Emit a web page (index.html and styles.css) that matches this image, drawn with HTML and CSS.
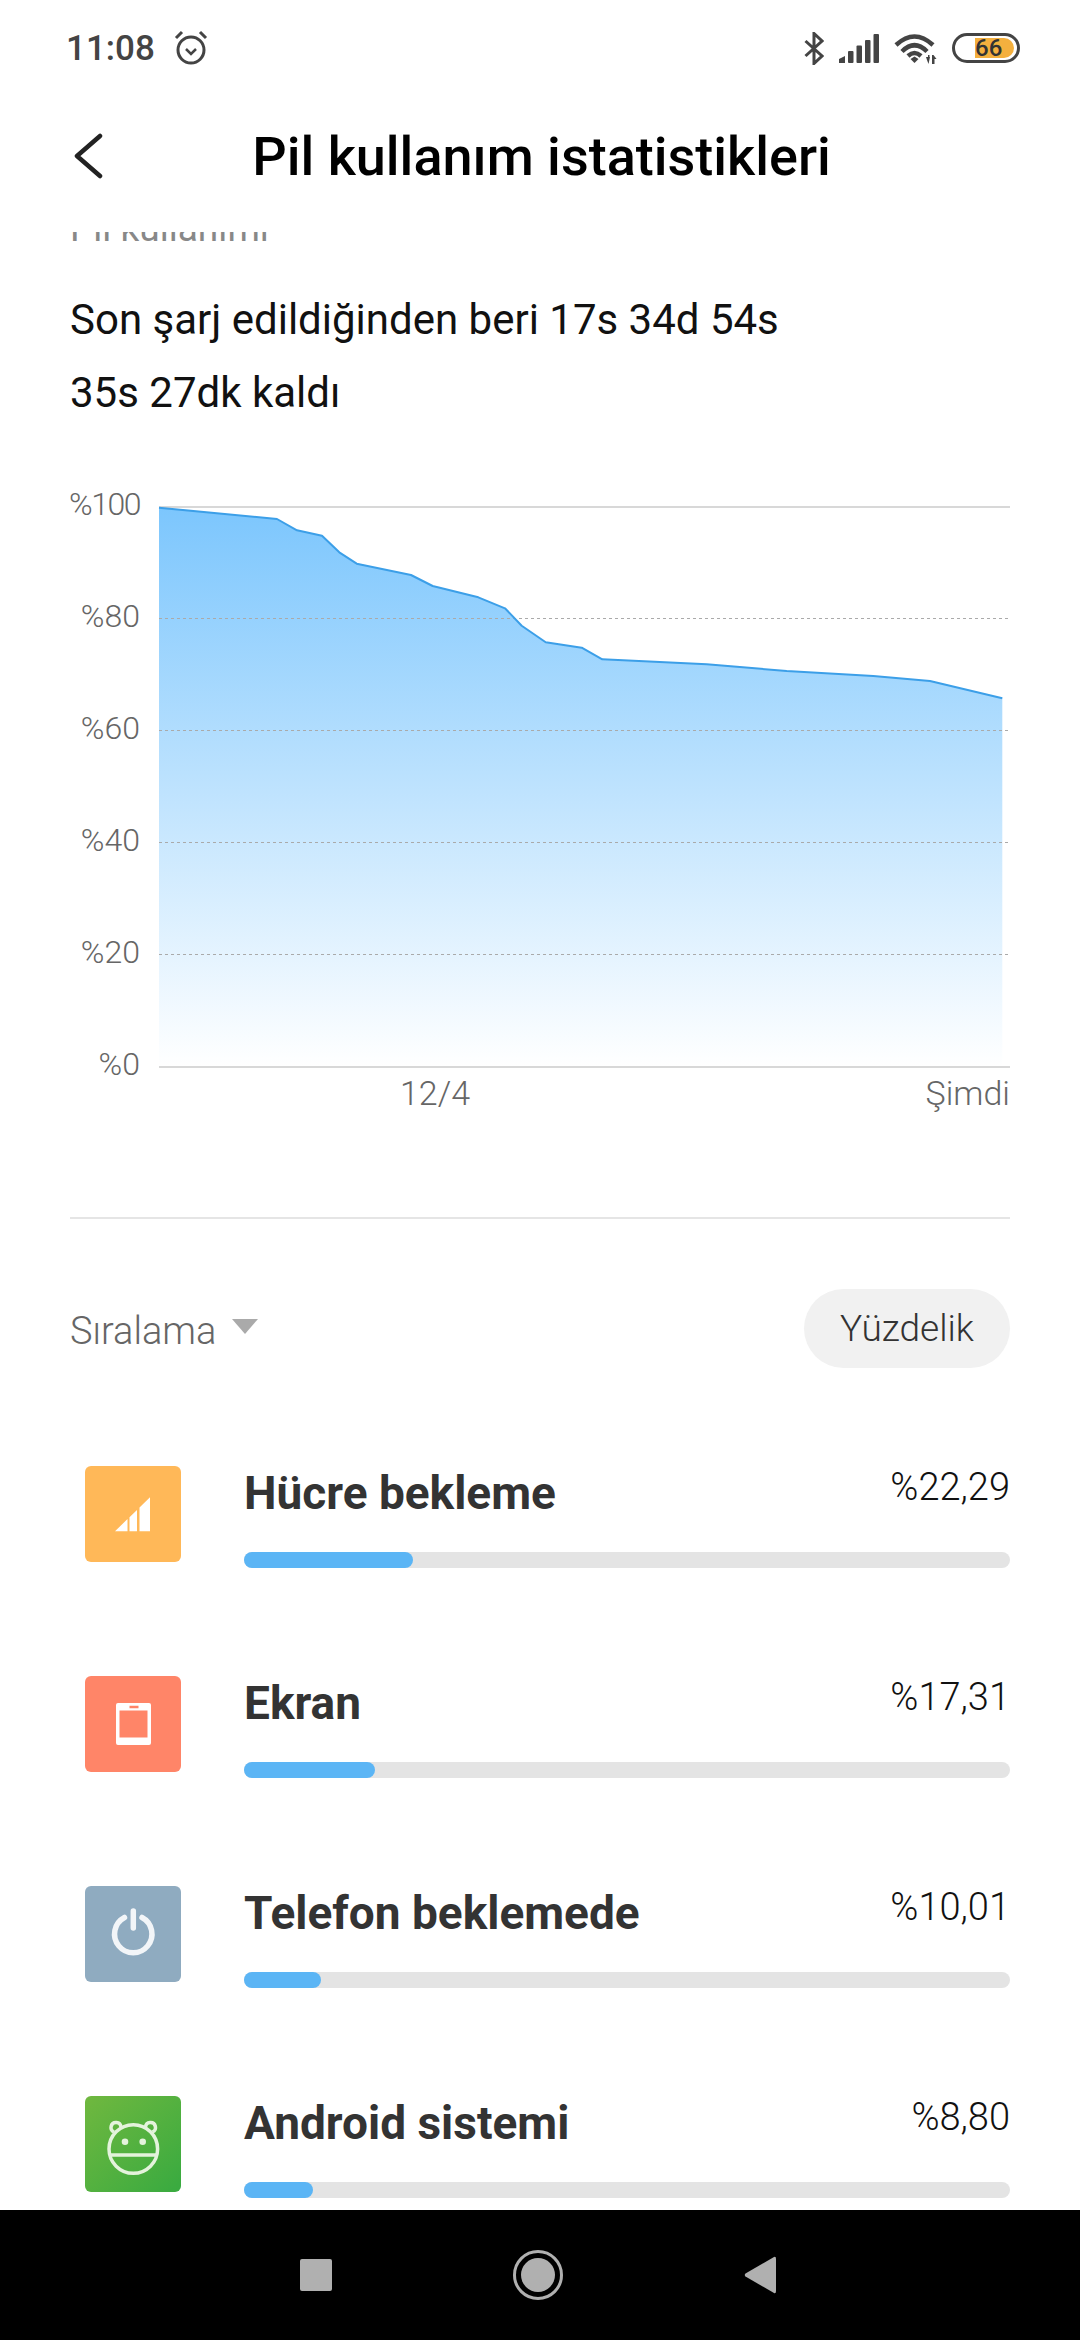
FILE: index.html
```html
<!DOCTYPE html>
<html lang="tr">
<head>
  <meta charset="UTF-8" />
  <meta name="viewport" content="width=device-width, initial-scale=1.0"/>
  <title>Pil kullanım istatistikleri</title>
  <link rel="stylesheet" href="styles.css">
</head>
<body>
  <div class="phone">

    <!-- status bar + title -->
    <header class="top">
      <div class="statusbar">
        <div class="status-left">
          <span class="time">11:08</span>
          <svg class="ic-alarm" viewBox="0 0 36 36">
            <circle cx="18" cy="20" r="13" />
            <path d="M3 8 L9 2 M33 8 L27 2" />
            <path class="thin" d="M13 19 L18 24 L23 19" />
          </svg>
        </div>
        <div class="status-right">
          <svg class="ic-bt" viewBox="0 0 20 33">
            <path d="M1.5 9 L18 24 L10 31.5 L10 1.5 L18 9 L1.5 24" />
          </svg>
          <svg class="ic-signal" viewBox="0 0 40 29">
            <path d="M0 29 V25 L6 22 V29 Z" />
            <rect x="9" y="17" width="5.5" height="12" rx="1" />
            <rect x="17.5" y="11.5" width="5.5" height="17.5" rx="1" />
            <rect x="26" y="6" width="5.5" height="23" rx="1" />
            <rect x="34.5" y="0" width="5.5" height="29" rx="1" />
          </svg>
          <svg class="ic-wifi" viewBox="0 0 43 31">
            <path class="arc" d="M2 12 Q20.5 -5 39 12" />
            <path class="arc" d="M8 18.5 Q20.5 6 33 18.5" />
            <path class="arc" d="M14 23 Q20.5 17 27 23" />
            <path d="M16.5 26 L20.5 23.5 L24.5 26 L20.5 30 Z" />
            <path d="M32 24 H34 V22 H35.5 V24 L36 24 L34.5 31 L33 27 Z" />
            <path d="M38 22 H39.5 L42.5 26 H40.5 V31 H38 Z" />
          </svg>
          <div class="battery">
            <div class="battery-fill">66</div>
          </div>
        </div>
      </div>
      <div class="toolbar">
        <svg class="ic-back" viewBox="0 0 30 46">
          <path d="M27 3 L4 23 L27 43" />
        </svg>
        <h1>Pil kullanım istatistikleri</h1>
      </div>
    </header>

    <main class="content">
      <p class="usage-label">Pil kullanımı</p>
      <p class="summary">Son şarj edildiğinden beri 17s 34d 54s</p>
      <p class="summary">35s 27dk kaldı</p>

      <!-- battery chart, y = 480px less than on the screen -->
      <svg class="chart" viewBox="0 0 1080 660">
        <defs>
          <linearGradient id="areaFill" x1="0" y1="0" x2="0" y2="1">
            <stop offset="0" stop-color="#7cc6fd" />
            <stop offset="1" stop-color="#ffffff" />
          </linearGradient>
        </defs>
        <path class="area" d="M159 27.7 L277 39 L297 50.3 L322 55.7 L339.3 72.3 L356.7 83.7 L411 95 L432.7 106 L478.3 117.3 L505 128.3 L521.7 145.7 L545.7 162.3 L581.7 167.7 L602.3 179.3 L706.7 184.3 L786.7 191 L873.3 196 L930 201 L1002.3 218.3 L1002.3 587 L159 587 Z" />
        <line class="axis" x1="159" y1="27" x2="1010" y2="27" />
        <line class="grid" x1="159" y1="138.5" x2="1010" y2="138.5" />
        <line class="grid" x1="159" y1="250.5" x2="1010" y2="250.5" />
        <line class="grid" x1="159" y1="362.5" x2="1010" y2="362.5" />
        <line class="grid" x1="159" y1="474.5" x2="1010" y2="474.5" />
        <line class="axis" x1="159" y1="587" x2="1010" y2="587" />
        <path class="curve" d="M159 27.7 L277 39 L297 50.3 L322 55.7 L339.3 72.3 L356.7 83.7 L411 95 L432.7 106 L478.3 117.3 L505 128.3 L521.7 145.7 L545.7 162.3 L581.7 167.7 L602.3 179.3 L706.7 184.3 L786.7 191 L873.3 196 L930 201 L1002.3 218.3" />
        <text class="lbl tight" x="140" y="35">%100</text>
        <text class="lbl" x="140" y="147">%80</text>
        <text class="lbl" x="140" y="259">%60</text>
        <text class="lbl" x="140" y="371">%40</text>
        <text class="lbl" x="140" y="483">%20</text>
        <text class="lbl" x="140" y="595">%0</text>
        <text class="lbl xlbl mid" x="435" y="625">12/4</text>
        <text class="lbl xlbl" x="1010" y="625">Şimdi</text>
      </svg>

      <div class="divider"></div>

      <div class="sort-row">
        <div class="sort-by">Sıralama <span class="caret"></span></div>
        <div class="pill">Yüzdelik</div>
      </div>

      <ul class="apps">
        <li class="app">
          <svg class="app-icon" viewBox="0 0 96 96">
            <rect class="bg-orange" width="96" height="96" rx="6" />
            <path class="w" d="M30 65.3 L42.5 53 V65.3 Z M44.5 51.2 L52 44 V65.3 H44.5 Z M54.5 41.5 L65 31.3 V65.3 H54.5 Z" />
          </svg>
          <div class="app-info">
            <div class="app-head"><span class="app-name">Hücre bekleme</span><span class="app-val">%22,29</span></div>
            <div class="track"><div class="bar" style="width:22.1%"></div></div>
          </div>
        </li>
        <li class="app">
          <svg class="app-icon" viewBox="0 0 96 96">
            <rect class="bg-red" width="96" height="96" rx="6" />
            <path class="w" fill-rule="evenodd" d="M33 27 H64 Q66 27 66 29 V67 Q66 69 64 69 H33 Q31 69 31 67 V29 Q31 27 33 27 Z M34.5 34.5 V61.5 H62.5 V34.5 Z M44.5 29.7 V32.3 H53.5 V29.7 Z" />
          </svg>
          <div class="app-info">
            <div class="app-head"><span class="app-name">Ekran</span><span class="app-val">%17,31</span></div>
            <div class="track"><div class="bar" style="width:17.1%"></div></div>
          </div>
        </li>
        <li class="app">
          <svg class="app-icon" viewBox="0 0 96 96">
            <rect class="bg-slate" width="96" height="96" rx="6" />
            <path class="line-w" d="M39.5 31.5 A18.7 18.7 0 1 0 57 31.5" />
            <path class="line-w" stroke-linecap="butt" d="M48.3 25 V42" />
          </svg>
          <div class="app-info">
            <div class="app-head"><span class="app-name">Telefon beklemede</span><span class="app-val">%10,01</span></div>
            <div class="track"><div class="bar" style="width:10%"></div></div>
          </div>
        </li>
        <li class="app">
          <svg class="app-icon" viewBox="0 0 96 96">
            <defs>
              <linearGradient id="droidBg" x1="0" y1="0" x2="1" y2="1">
                <stop offset="0" stop-color="#70b83f" />
                <stop offset="1" stop-color="#38aa40" />
              </linearGradient>
            </defs>
            <rect class="bg-green" width="96" height="96" rx="6" />
            <circle class="line-g" cx="48.3" cy="53" r="24.3" />
            <path class="line-g" d="M24.5 59 H72 M36 31 A5 5 0 1 0 29 36 M60.5 31 A5 5 0 1 1 67.5 36" />
            <circle class="dot-g" cx="40" cy="45.7" r="3.3" />
            <circle class="dot-g" cx="57.7" cy="45.7" r="3.3" />
          </svg>
          <div class="app-info">
            <div class="app-head"><span class="app-name">Android sistemi</span><span class="app-val">%8,80</span></div>
            <div class="track"><div class="bar" style="width:9%"></div></div>
          </div>
        </li>
      </ul>
    </main>

    <nav class="navbar">
      <svg class="nav-ic" viewBox="0 0 32 32" width="32" height="32">
        <rect width="32" height="32" rx="2" />
      </svg>
      <svg class="nav-ic" viewBox="0 0 50 50" width="50" height="50">
        <circle class="ring" cx="25" cy="25" r="23.5" />
        <circle cx="25" cy="25" r="17" />
      </svg>
      <svg class="nav-ic" viewBox="0 0 32 38" width="32" height="38">
        <path d="M30 1 Q32 0 32 3 V35 Q32 38 30 37 L1.5 20.5 Q0 19 1.5 17.5 Z" />
      </svg>
    </nav>
  </div>
</body>
</html>
```

FILE: styles.css
```css
/* --- page --- */
* {
  box-sizing: border-box;
}

body {
  margin: 0;
  background-color: #fff;
  font-family: Roboto, "Noto Sans", sans-serif;
}

.phone {
  width: 1080px;
  height: 2340px;
  display: flex;
  flex-direction: column;
  overflow: hidden;
}

/* --- status bar --- */
.top {
  height: 232px;
  flex-shrink: 0;
  background-color: #fff;
}

.statusbar {
  height: 80px;
  padding: 16px 60px 0 66px;
  display: flex;
  justify-content: space-between;
  align-items: center;
}

.status-left,
.status-right {
  display: flex;
  align-items: center;
}

.status-left {
  gap: 18px;
}

.status-right {
  gap: 15px;
}

.time {
  font-size: 35px;
  font-weight: 500;
  color: #444;
}

.ic-alarm {
  width: 36px;
  height: 36px;
  fill: none;
  stroke: #444;
  stroke-width: 3;
}

.ic-alarm .thin {
  stroke-width: 2.5;
}

.ic-bt {
  width: 20px;
  height: 33px;
  fill: none;
  stroke: #444;
  stroke-width: 3;
}

.ic-signal {
  width: 40px;
  height: 29px;
  fill: #444;
}

.ic-wifi {
  width: 43px;
  height: 31px;
  fill: #444;
}

.ic-wifi .arc {
  fill: none;
  stroke: #444;
  stroke-width: 4.5;
}

.battery {
  width: 68px;
  height: 30px;
  padding: 2px 3px 2px 20px;
  border: 3px solid #444;
  border-radius: 15px;
  display: flex;
}

.battery-fill {
  flex: 1;
  background-color: #f4b03e;
  border-radius: 0 10px 10px 0;
  font-size: 24px;
  font-weight: 500;
  line-height: 20px;
  color: #333;
}

/* --- title --- */
.toolbar {
  height: 152px;
  padding: 0 70px 0 73px;
  display: grid;
  grid-template-columns: 1fr auto 1fr;
  align-items: center;
}

.ic-back {
  width: 30px;
  height: 46px;
  fill: none;
  stroke: #222;
  stroke-width: 4.5;
  stroke-linecap: round;
  stroke-linejoin: round;
}

.toolbar h1 {
  margin: 0;
  font-size: 54px;
  font-weight: 500;
  color: #000;
}

/* --- scrolled content --- */
.content {
  flex: 1;
  min-height: 0;
  overflow: hidden;
}

.usage-label {
  margin: -23px 0 34px;
  padding-left: 70px;
  font-size: 37px;
  line-height: 40px;
  color: #888;
}

.summary {
  margin: 0;
  padding-left: 70px;
  font-size: 42px;
  line-height: 73px;
  color: #111;
}

/* --- chart --- */
.chart {
  display: block;
  width: 1080px;
  height: 660px;
  margin-top: 51px;
}

.area {
  fill: url(#areaFill);
}

.curve {
  fill: none;
  stroke: #3c9fe8;
  stroke-width: 2;
  stroke-linejoin: round;
}

.axis {
  stroke: #d8d8d8;
  stroke-width: 2;
}

.grid {
  stroke: #aaa;
  stroke-width: 1;
  stroke-dasharray: 3 3;
}

.lbl {
  font-size: 32px;
  font-weight: 300;
  fill: #666;
  text-anchor: end;
}

.lbl.tight {
  letter-spacing: -1.5px;
}

.lbl.xlbl {
  font-size: 34px;
}

.lbl.mid {
  text-anchor: middle;
}

/* --- sort row --- */
.divider {
  height: 2px;
  margin: 77px 70px 0;
  background-color: #e5e5e5;
}

.sort-row {
  margin: 70px 70px 0;
  display: flex;
  justify-content: space-between;
  align-items: center;
}

.sort-by {
  margin-top: 5px;
  display: flex;
  align-items: center;
  gap: 16px;
  font-size: 38px;
  font-weight: 300;
  color: #666;
}

.caret {
  width: 0;
  height: 0;
  border-left: 13px solid transparent;
  border-right: 13px solid transparent;
  border-top: 15px solid #aaa;
  margin-top: -9px;
}

.pill {
  width: 206px;
  height: 79px;
  border-radius: 40px;
  background-color: #f1f1f1;
  display: flex;
  justify-content: center;
  align-items: center;
  font-size: 37px;
  font-weight: 300;
  color: #333;
}

/* --- app list --- */
.apps {
  list-style: none;
  margin: 98px 70px 0 85px;
  padding: 0;
  display: flex;
  flex-direction: column;
  gap: 108px;
}

.app {
  height: 102px;
  display: flex;
  gap: 63px;
}

.app-icon {
  width: 96px;
  height: 96px;
  flex-shrink: 0;
}

.bg-orange { fill: #ffb858; }
.bg-red { fill: #ff8568; }
.bg-slate { fill: #8fabc0; }
.bg-green { fill: url(#droidBg); }

.w {
  fill: #fff;
}

.line-w {
  fill: none;
  stroke: #f2f5f8;
  stroke-width: 5.5;
  stroke-linecap: round;
}

.line-g {
  fill: none;
  stroke: #e4f3dc;
  stroke-width: 3.5;
}

.dot-g {
  fill: #e4f3dc;
}

.app-info {
  flex: 1;
}

.app-head {
  height: 54px;
  display: flex;
  justify-content: space-between;
}

.app-name {
  font-size: 46px;
  font-weight: 700;
  line-height: 54px;
  color: #333;
}

.app-val {
  font-size: 38px;
  font-weight: 300;
  line-height: 42px;
  color: #111;
}

.track {
  height: 16px;
  margin-top: 32px;
  border-radius: 8px;
  background-color: #e4e4e4;
}

.bar {
  height: 100%;
  border-radius: 8px;
  background-color: #5bb5f5;
}

/* --- nav bar --- */
.navbar {
  height: 130px;
  flex-shrink: 0;
  padding: 0 304px 0 300px;
  background-color: #000;
  display: flex;
  justify-content: space-between;
  align-items: center;
}

.nav-ic {
  fill: #b0b0b0;
}

.nav-ic .ring {
  fill: none;
  stroke: #b0b0b0;
  stroke-width: 3;
}
```
